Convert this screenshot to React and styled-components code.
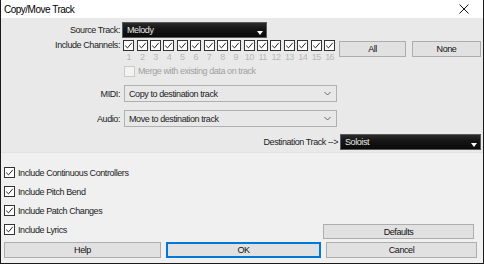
import React from "react";
import styled, { createGlobalStyle } from "styled-components";

const FONT = '"Liberation Sans", Arial, sans-serif';

const GlobalStyle = createGlobalStyle`
  html, body {
    margin: 0;
    padding: 0;
    background: #fff;
  }
  * {
    box-sizing: border-box;
  }
`;

const Dialog = styled.div`
  width: 484px;
  height: 264px;
  display: flex;
  flex-direction: column;
  background: #f0f0f0;
  border: 1px solid #1a1a1a;
  border-top: none;
  font-family: ${FONT};
  font-size: 9px;
  letter-spacing: -0.42px;
  color: #222;
  overflow: hidden;
`;

const TitleBar = styled.div`
  height: 18px;
  flex: none;
  display: flex;
  align-items: center;
  justify-content: space-between;
  background: #fff;
  padding: 0 14px 0 3px;
  font-size: 10px;
  letter-spacing: -0.5px;
  color: #000;
`;

const Panel = styled.div`
  height: 135px;
  flex: none;
  background: #e9e9e9;
  border-bottom: 1px solid #e2e2e2;
  padding-top: 4px;
  display: flex;
  flex-direction: column;
`;

const Row = styled.div`
  display: flex;
  align-items: ${(p) => p.$align || "center"};
  height: ${(p) => p.$h}px;
  margin-top: ${(p) => p.$mt || 0}px;
  justify-content: ${(p) => p.$justify || "flex-start"};
  padding-right: ${(p) => p.$pr || 0}px;
`;

const Label = styled.div`
  width: ${(p) => p.$w || 121}px;
  flex: none;
  text-align: right;
  padding-right: 2px;
  white-space: nowrap;
`;

const DarkSelect = styled.div`
  position: relative;
  width: ${(p) => p.$w}px;
  height: 16px;
  background: linear-gradient(#2a2a2a, #151515 40%, #0a0a0a);
  border: 1px solid #5a5a5a;
  color: #e8e8e8;
  display: flex;
  align-items: center;
  padding-left: 4px;
`;

const DarkArrow = styled.span`
  position: absolute;
  right: 3px;
  bottom: 2px;
  width: 0;
  height: 0;
  border-left: 3px solid transparent;
  border-right: 3px solid transparent;
  border-top: 4px solid #fff;
`;

const Channels = styled.div`
  display: flex;
  flex-direction: column;
  width: 215px;
  flex: none;
`;

const ChannelGrid = styled.div`
  display: grid;
  grid-template-columns: repeat(16, 13.4px);
  justify-items: center;
`;

const Num = styled.div`
  font-size: 9px;
  letter-spacing: -0.6px;
  color: #b8b8b8;
  text-align: center;
  height: 11px;
  line-height: 12px;
`;

const Box = styled.span`
  width: 11px;
  height: 11px;
  flex: none;
  border: 1px solid ${(p) => (p.$disabled ? "#cacaca" : "#333")};
  background: ${(p) => (p.$disabled ? "#f3f3f3" : "#fff")};
  display: flex;
  align-items: center;
  justify-content: center;
`;

const Check = ({ disabled, checked = true }) => (
  <Box $disabled={disabled}>
    {checked && (
      <svg width="9" height="9" viewBox="0 0 9 9">
        <path d="M1.2 4.6 L3.5 6.9 L7.8 1.8" fill="none" stroke="#222" strokeWidth="1" />
      </svg>
    )}
  </Box>
);

const Button = styled.div`
  width: ${(p) => p.$w}px;
  height: ${(p) => p.$h || 16}px;
  flex: none;
  display: flex;
  align-items: center;
  justify-content: center;
  background: #e1e1e1;
  border: ${(p) => (p.$primary ? "2px solid #0078d7" : "1px solid #adadad")};
  color: #111;
`;

const ChanButtons = styled.div`
  display: flex;
  gap: 6px;
  margin-left: 2px;
  margin-top: 1px;
`;

const CheckRow = styled.div`
  display: flex;
  align-items: center;
  gap: 3px;
  color: ${(p) => (p.$disabled ? "#a0a0a0" : "inherit")};
  margin-left: ${(p) => p.$ml || 0}px;
`;

const LightSelect = styled.div`
  width: 213px;
  height: 17px;
  margin-left: 2px;
  background: #e8e8e8;
  border: 1px solid #b0b0b0;
  display: flex;
  align-items: center;
  justify-content: space-between;
  padding: 0 5px 0 4px;
`;

const Lower = styled.div`
  flex: 1;
  display: flex;
  flex-direction: column;
  padding: 14px 9px 0 3px;
`;

const OptionList = styled.div`
  display: flex;
  flex-direction: column;
  gap: 8px;
`;

const SplitRow = styled.div`
  display: flex;
  justify-content: space-between;
  align-items: flex-start;
  margin-top: 8px;
  height: 17px;
`;

const ButtonBar = styled.div`
  display: flex;
  gap: 5px;
  margin-top: 1px;
`;

const Chevron = () => (
  <svg width="7" height="5" viewBox="0 0 7 5">
    <path d="M0.5 1 L3.5 4 L6.5 1" fill="none" stroke="#666" strokeWidth="1" />
  </svg>
);

const CloseIcon = () => (
  <svg width="10" height="10" viewBox="0 0 10 10">
    <path d="M0.5 0.5 L9.5 9.5 M9.5 0.5 L0.5 9.5" stroke="#111" strokeWidth="1" />
  </svg>
);

const channels = Array.from({ length: 16 }, (_, i) => i + 1);

export default function App() {
  return (
    <>
      <GlobalStyle />
      <Dialog>
        <TitleBar>
          <span>Copy/Move Track</span>
          <CloseIcon />
        </TitleBar>
        <Panel>
          <Row $h={16}>
            <Label>Source Track:</Label>
            <DarkSelect $w={145}>
              Melody
              <DarkArrow />
            </DarkSelect>
          </Row>
          <Row $h={24} $mt={2} $align="flex-start">
            <Label>Include Channels:</Label>
            <Channels>
              <ChannelGrid>
                {channels.map((n) => (
                  <Check key={n} />
                ))}
              </ChannelGrid>
              <ChannelGrid>
                {channels.map((n) => (
                  <Num key={n}>{n}</Num>
                ))}
              </ChannelGrid>
            </Channels>
            <ChanButtons>
              <Button $w={67}>All</Button>
              <Button $w={69}>None</Button>
            </ChanButtons>
          </Row>
          <Row $h={12} $mt={1}>
            <CheckRow $ml={123} $disabled>
              <Check disabled checked={false} />
              Merge with existing data on track
            </CheckRow>
          </Row>
          <Row $h={17} $mt={8}>
            <Label>MIDI:</Label>
            <LightSelect>
              Copy to destination track
              <Chevron />
            </LightSelect>
          </Row>
          <Row $h={17} $mt={8}>
            <Label>Audio:</Label>
            <LightSelect>
              Move to destination track
              <Chevron />
            </LightSelect>
          </Row>
          <Row $h={16} $mt={7} $justify="flex-end" $pr={2}>
            <Label $w={160}>Destination Track --&gt;</Label>
            <DarkSelect $w={141}>
              Soloist
              <DarkArrow />
            </DarkSelect>
          </Row>
        </Panel>
        <Lower>
          <OptionList>
            <CheckRow>
              <Check />
              Include Continuous Controllers
            </CheckRow>
            <CheckRow>
              <Check />
              Include Pitch Bend
            </CheckRow>
            <CheckRow>
              <Check />
              Include Patch Changes
            </CheckRow>
          </OptionList>
          <SplitRow>
            <CheckRow>
              <Check />
              Include Lyrics
            </CheckRow>
            <Button $w={151} $h={15}>Defaults</Button>
          </SplitRow>
          <ButtonBar>
            <Button $w={157}>Help</Button>
            <Button $w={155} $primary>OK</Button>
            <Button $w={151}>Cancel</Button>
          </ButtonBar>
        </Lower>
      </Dialog>
    </>
  );
}
